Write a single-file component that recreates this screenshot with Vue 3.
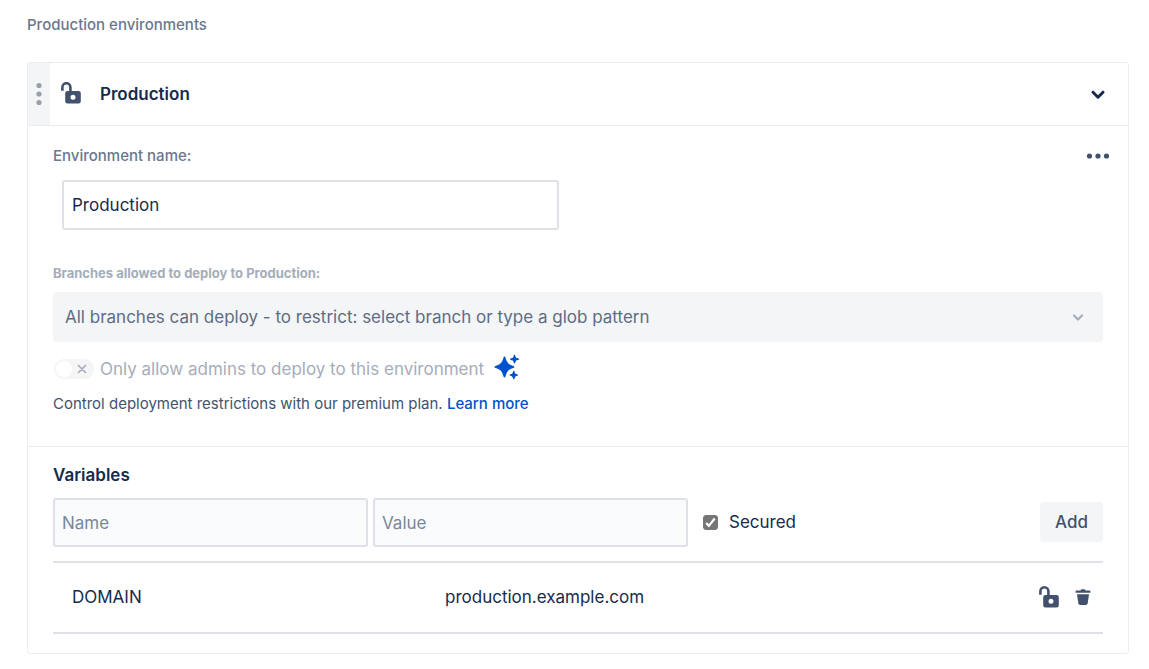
<script setup>
import { ref } from 'vue'

const envName = ref('Production')
const branch = ref('')
const adminsOnly = ref(false)
const newName = ref('')
const newValue = ref('')
const secured = ref(true)
const open = ref(true)
const variables = ref([{ name: 'DOMAIN', value: 'production.example.com' }])

function addVariable() {
  if (!newName.value) return
  variables.value.push({ name: newName.value, value: newValue.value })
  newName.value = ''
  newValue.value = ''
}
</script>

<template>
  <main class="page">
    <h2 class="group-title">Production environments</h2>

    <section class="card">
      <header class="card-header">
        <button type="button" class="drag" aria-label="Reorder environment">
          <svg width="6" height="24" viewBox="0 0 6 24" fill="currentColor">
            <circle cx="3" cy="3.500" r="2.600" />
            <circle cx="3" cy="12" r="2.600" />
            <circle cx="3" cy="20.500" r="2.600" />
          </svg>
        </button>
        <svg class="lock" width="22" height="24" viewBox="0 0 22 24" aria-hidden="true">
          <path d="M2.400 8.700V5.200a4 4 0 0 1 8 0V9" fill="none" stroke="currentColor" stroke-width="2.600" />
          <path fill="currentColor" fill-rule="evenodd" d="M7.500 9h11A2.300 2.300 0 0 1 20.800 11.300v8A2.300 2.300 0 0 1 18.500 21.600h-11A2.300 2.300 0 0 1 5.200 19.300v-8A2.300 2.300 0 0 1 7.500 9zM13 12.800a2.500 2.500 0 1 0 0 5a2.500 2.500 0 0 0 0-5z" />
        </svg>
        <h3 class="card-title">Production</h3>
        <button type="button" class="plain toggle-card" aria-label="Toggle details" :aria-expanded="open" @click="open = !open">
          <svg width="16" height="12" viewBox="0 0 16 12">
            <path d="M3 4.200l5 5l5-5" fill="none" stroke="currentColor" stroke-width="3" stroke-linecap="round" stroke-linejoin="round" />
          </svg>
        </button>
      </header>

      <div v-if="open" class="settings">
        <div class="label-row">
          <label class="label" for="env-name">Environment name:</label>
          <button type="button" class="plain more" aria-label="More actions">
            <svg width="24" height="6" viewBox="0 0 24 6" fill="currentColor">
              <circle cx="3.500" cy="3" r="2.600" />
              <circle cx="12" cy="3" r="2.600" />
              <circle cx="20.500" cy="3" r="2.600" />
            </svg>
          </button>
        </div>
        <input id="env-name" v-model="envName" class="field env-input" type="text" />

        <label class="small-label" for="branches">Branches allowed to deploy to Production:</label>
        <div class="select-box">
          <select id="branches" v-model="branch" class="select" disabled>
            <option value="">All branches can deploy - to restrict: select branch or type a glob pattern</option>
          </select>
          <svg class="select-arrow" width="12" height="10" viewBox="0 0 12 10" aria-hidden="true">
            <path d="M2 3.500l4 4l4-4" fill="none" stroke="currentColor" stroke-width="2.200" stroke-linecap="round" stroke-linejoin="round" />
          </svg>
        </div>

        <div class="admin-row">
          <label class="admin-label">
            <span class="switch">
              <input v-model="adminsOnly" type="checkbox" class="switch-input" disabled />
              <span class="knob"></span>
              <svg width="10" height="10" viewBox="0 0 10 10" aria-hidden="true">
                <path d="M1.500 1.500l7 7M8.500 1.500l-7 7" fill="none" stroke="currentColor" stroke-width="1.700" stroke-linecap="round" />
              </svg>
            </span>
            <span>Only allow admins to deploy to this environment</span>
          </label>
          <svg class="sparkle" width="26" height="26" viewBox="0 0 26 26" fill="currentColor" aria-hidden="true">
            <path d="M10.500 2.500C11 2.500 11.300 3 11.500 3.600C12.700 8.500 14.500 10.700 19.300 12C20.800 12.400 20.800 13.600 19.300 14C14.500 15.300 12.700 17.500 11.500 22.400C11.200 23.700 9.800 23.700 9.500 22.400C8.300 17.500 6.500 15.300 1.500 14C0 13.600 0 12.400 1.500 12C6.500 10.700 8.300 8.500 9.500 3.600C9.700 3 10 2.500 10.500 2.500z" />
            <path d="M20.500 0.600C21.300 0.600 21.400 3.200 22.200 3.800C23 4.400 25.200 4.300 25.200 5.200C25.200 6.100 23 6 22.200 6.600C21.400 7.300 21.300 9.600 20.500 9.600C19.700 9.600 19.600 7.300 18.800 6.600C18 6 16 6.100 16 5.200C16 4.300 18 4.400 18.800 3.800C19.600 3.200 19.700 0.600 20.500 0.600z" />
            <path d="M19.800 16.800C20.600 16.800 20.700 19 21.500 19.700C22.200 20.300 24.300 20.200 24.300 21.100C24.300 22 22.200 21.900 21.500 22.500C20.700 23.200 20.600 25.400 19.800 25.400C19 25.400 18.900 23.200 18.100 22.500C17.300 21.900 15.400 22 15.400 21.100C15.400 20.200 17.300 20.300 18.100 19.700C18.900 19 19 16.800 19.800 16.800z" />
          </svg>
        </div>

        <p class="note">Control deployment restrictions with our premium plan. <a href="#premium">Learn more</a></p>
      </div>

      <div v-if="open" class="variables">
        <h4 class="variables-title">Variables</h4>
        <form class="add-row" @submit.prevent="addVariable">
          <input v-model="newName" class="field new-field" type="text" placeholder="Name" aria-label="Name" />
          <input v-model="newValue" class="field new-field" type="text" placeholder="Value" aria-label="Value" />
          <label class="secured">
            <span class="check">
              <input v-model="secured" type="checkbox" class="check-input" />
              <svg v-if="secured" width="15" height="15" viewBox="0 0 15 15" aria-hidden="true">
                <path d="M3.200 8l2.700 2.900l5.800-7.400" fill="none" stroke="currentColor" stroke-width="2.200" />
              </svg>
            </span>
            <span>Secured</span>
          </label>
          <button type="submit" class="add">Add</button>
        </form>

        <table class="table" aria-label="Variables">
          <tbody>
            <tr v-for="item in variables" :key="item.name">
              <td class="name-cell">{{ item.name }}</td>
              <td>{{ item.value }}</td>
              <td class="action-cell">
                <div class="actions">
                  <button type="button" class="plain" aria-label="Secure variable">
                    <svg width="22" height="24" viewBox="0 0 22 24">
                      <path d="M2.400 9.700V6.200a4 4 0 0 1 8 0V10" fill="none" stroke="currentColor" stroke-width="2.600" />
                      <path fill="currentColor" fill-rule="evenodd" d="M7.500 10h11A2.300 2.300 0 0 1 20.800 12.300v8A2.300 2.300 0 0 1 18.500 22.600h-11A2.300 2.300 0 0 1 5.200 20.300v-8A2.300 2.300 0 0 1 7.500 10zM13 13.800a2.500 2.500 0 1 0 0 5a2.500 2.500 0 0 0 0-5z" />
                    </svg>
                  </button>
                  <button type="button" class="plain" aria-label="Delete variable">
                    <svg width="16" height="18" viewBox="0 0 16 18" fill="currentColor">
                      <path d="M1.400 2.600H5.500Q5.700 1.200 7 1.200H9Q10.300 1.200 10.500 2.600H14.600Q15.400 2.600 15.400 3.500V4.700H0.600V3.500Q0.600 2.600 1.400 2.600z" />
                      <path d="M2 6.200H14L12.700 15.200Q12.400 17 10.800 17H5.200Q3.600 17 3.300 15.200z" />
                    </svg>
                  </button>
                </div>
              </td>
            </tr>
          </tbody>
        </table>
      </div>
    </section>
  </main>
</template>

<style>
body {
  margin: 0;
  background: #fff;
}
</style>

<style scoped>
.page {
  padding: 14px 20px 15px 27px;
  font-family: Inter, "Liberation Sans", sans-serif;
  font-size: 17px;
  line-height: 24px;
  color: #172b4d;
}

.page * {
  box-sizing: border-box;
}

h2, h3, h4, p {
  margin: 0;
}

button, input, select {
  font: inherit;
  color: inherit;
}

svg {
  display: block;
  flex: none;
}

.group-title {
  margin-bottom: 26px;
  font-size: 15px;
  line-height: 22px;
  font-weight: 500;
  color: #6b778c;
}

.card {
  border: 1px solid #ebecf0;
  border-radius: 3px;
}

.card-header {
  display: flex;
  align-items: center;
  height: 63px;
  padding-right: 22px;
  border-bottom: 1px solid #ebecf0;
}

.drag {
  display: flex;
  align-items: center;
  justify-content: center;
  align-self: stretch;
  width: 22px;
  padding: 0;
  border: 0;
  background: #f4f5f7;
  color: #97a0af;
}

.lock {
  margin-left: 10px;
  color: #42526e;
}

.card-title {
  flex: 1;
  margin-left: 18px;
  font-size: 17px;
  font-weight: 600;
}

.plain {
  display: flex;
  padding: 0;
  border: 0;
  background: none;
  color: #42526e;
}

.toggle-card {
  color: #172b4d;
}

.settings {
  padding: 19px 25px 31px;
  border-bottom: 1px solid #ebecf0;
}

.label-row {
  display: flex;
  align-items: center;
  justify-content: space-between;
  height: 22px;
}

.label {
  font-size: 15px;
  line-height: 22px;
  font-weight: 500;
  color: #6b778c;
}

.more {
  margin-right: -7px;
}

.field {
  display: block;
  border: 2px solid #dfe1e6;
  border-radius: 3px;
  outline: none;
}

.env-input {
  width: 497px;
  max-width: 100%;
  height: 50px;
  margin: 13px 0 33px 9px;
  padding: 0 8px;
  background: #fff;
}

.small-label {
  display: block;
  margin-bottom: 9px;
  font-size: 13px;
  line-height: 20px;
  font-weight: 700;
  color: #a5adba;
}

.select-box {
  position: relative;
}

.select {
  display: block;
  width: 100%;
  height: 50px;
  padding: 0 40px 0 12px;
  border: 0;
  border-radius: 4px;
  background: #f4f5f7;
  color: #5e6c84;
  opacity: 1;
  appearance: none;
}

.select-arrow {
  position: absolute;
  top: 20px;
  right: 19px;
  color: #a5adba;
  pointer-events: none;
}

.admin-row {
  display: flex;
  align-items: flex-start;
  gap: 10px;
  margin-top: 12px;
}

.admin-label {
  display: flex;
  align-items: center;
  gap: 6px;
  height: 30px;
  color: #a5adba;
}

.switch {
  display: flex;
  align-items: center;
  justify-content: space-between;
  position: relative;
  width: 40px;
  height: 20px;
  margin-left: 1px;
  padding: 0 7px 0 2px;
  border-radius: 10px;
  background: #f4f5f7;
}

.switch-input {
  position: absolute;
  inset: 0;
  margin: 0;
  opacity: 0;
}

.knob {
  width: 16px;
  height: 16px;
  border-radius: 50%;
  background: #fff;
}

.sparkle {
  color: #0052cc;
}

.note {
  margin-top: 9px;
  font-size: 15px;
  line-height: 22px;
  color: #42526e;
}

.note a {
  font-weight: 500;
  color: #0052cc;
  text-decoration: none;
}

.variables {
  padding: 16px 25px 19px;
}

.variables-title {
  margin-bottom: 11px;
  font-size: 17px;
  font-weight: 600;
}

.add-row {
  display: flex;
  align-items: flex-start;
  gap: 5px;
}

.new-field {
  flex: 0 1 315px;
  min-width: 0;
  height: 49px;
  padding: 0 7px;
  background: #fafbfc;
}

.new-field::placeholder {
  color: #7a869a;
  opacity: 1;
}

.secured {
  display: flex;
  align-items: center;
  gap: 11px;
  height: 48px;
  margin-left: 10px;
}

.check {
  display: block;
  position: relative;
  width: 15px;
  height: 15px;
  color: #fff;
}

.check-input {
  position: absolute;
  inset: 0;
  width: 15px;
  height: 15px;
  margin: 0;
  border: 1px solid #767676;
  border-radius: 3px;
  appearance: none;
}

.check-input:checked {
  background: #767676;
}

.check svg {
  position: relative;
  pointer-events: none;
}

.add {
  height: 40px;
  margin: 4px 0 0 auto;
  padding: 0 15px;
  border: 0;
  border-radius: 4px;
  background: #f4f5f7;
  color: #42526e;
  font-weight: 500;
}

.table {
  width: 100%;
  margin-top: 14px;
  border-collapse: collapse;
  border-top: 2px solid #dfe1e6;
}

.table td {
  height: 71px;
  padding: 0 0 2px;
  border-bottom: 2px solid #dfe1e6;
}

.table .name-cell {
  width: 392px;
  padding-left: 19px;
}

.table .action-cell {
  width: 80px;
  padding-right: 12px;
}

.actions {
  display: flex;
  align-items: center;
  justify-content: flex-end;
  gap: 15px;
}
</style>
